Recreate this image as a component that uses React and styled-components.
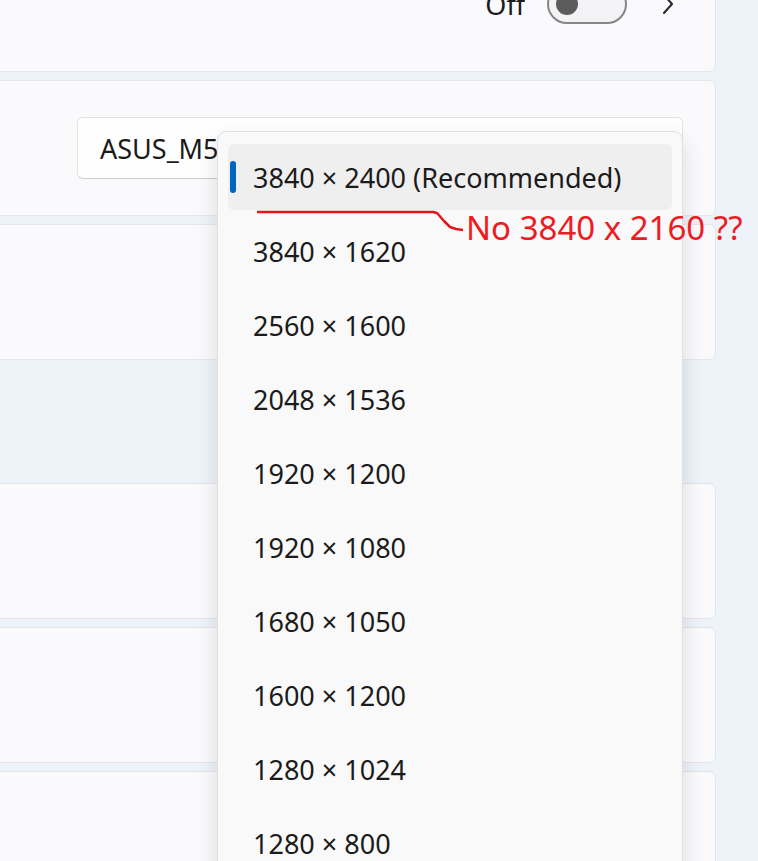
import React from "react";
import styled, { createGlobalStyle } from "styled-components";

const GlobalStyle = createGlobalStyle`
  html, body {
    margin: 0;
    padding: 0;
    background: #eef2f9;
  }
  body {
    font-family: "Noto Sans", "Open Sans", sans-serif;
    color: #1b1b1b;
  }
`;

const resolutions = [
  "3840 × 2400 (Recommended)",
  "3840 × 1620",
  "2560 × 1600",
  "2048 × 1536",
  "1920 × 1200",
  "1920 × 1080",
  "1680 × 1050",
  "1600 × 1200",
  "1280 × 1024",
  "1280 × 800",
];

const Page = styled.div`
  position: relative;
  width: 758px;
  height: 861px;
  overflow: hidden;
  background: #eef2f9;
`;

const Stack = styled.div`
  display: flex;
  flex-direction: column;
  gap: 8px;
  margin: -64px 42px 0 -10px;
`;

const Card = styled.div`
  height: 136px;
  box-sizing: border-box;
  background: #fafafc;
  border: 1px solid #e4e5ea;
  border-radius: 7px;
  display: flex;
  align-items: center;
  justify-content: flex-end;
  padding: 0 32px 0 0;
`;

const Spacer = styled.div`
  height: 107px;
`;

const StateLabel = styled.span`
  font-size: 27px;
  line-height: 36px;
  margin-right: 22px;
  margin-top: 2px;
`;

const Toggle = styled.div`
  width: 80px;
  height: 40px;
  box-sizing: border-box;
  border: 2px solid #858585;
  border-radius: 20px;
  background: #f3f3f5;
  display: flex;
  align-items: center;
  padding-left: 7px;
  margin-right: 34px;
`;

const Knob = styled.span`
  width: 22px;
  height: 22px;
  border-radius: 50%;
  background: #5c5c5c;
`;

const Chevron = styled.svg`
  margin-right: 8px;
`;

const Combo = styled.div`
  width: ${(p) => p.$w}px;
  height: 62px;
  box-sizing: border-box;
  background: #fefefe;
  border: 1px solid #e3e3e3;
  border-bottom-color: #cdcdcd;
  border-radius: 6px;
  display: flex;
  align-items: center;
  padding-left: 22px;
  font-size: 27px;
  white-space: nowrap;
  overflow: hidden;
`;

const Flyout = styled.div`
  position: absolute;
  left: 217px;
  top: 131px;
  width: 466px;
  height: 780px;
  box-sizing: border-box;
  background: #f9f9f9;
  border: 1px solid #e1e1e1;
  border-radius: 9px;
  box-shadow: 0 10px 22px rgba(0, 0, 0, 0.13);
  padding: 12px 10px;
  display: flex;
  flex-direction: column;
  gap: 8px;
`;

const Item = styled.div`
  position: relative;
  flex: none;
  height: 66px;
  border-radius: 6px;
  background: ${(p) => (p.$selected ? "#efefef" : "transparent")};
  display: flex;
  align-items: center;
  padding-left: 25px;
  font-size: 27px;
  white-space: nowrap;
`;

const Pill = styled.span`
  position: absolute;
  left: 2px;
  top: 17px;
  width: 6px;
  height: 32px;
  border-radius: 3px;
  background: #0067c0;
`;

const Scribble = styled.svg`
  position: absolute;
  left: 0;
  top: 0;
  pointer-events: none;
`;

const Note = styled.span`
  position: absolute;
  left: 466px;
  top: 208px;
  font-size: 33px;
  line-height: 40px;
  color: #ec1c24;
  white-space: nowrap;
`;

export default function App() {
  return (
    <Page>
      <GlobalStyle />
      <Stack>
        <Card>
          <StateLabel>Off</StateLabel>
          <Toggle>
            <Knob />
          </Toggle>
          <Chevron width="14" height="22" viewBox="0 0 14 22">
            <path d="M3 2 L11 11 L3 20" fill="none" stroke="#262626" strokeWidth="2" strokeLinecap="round" strokeLinejoin="round" />
          </Chevron>
        </Card>
        <Card>
          <Combo $w={606}>ASUS_M5</Combo>
        </Card>
        <Card />
        <Spacer />
        <Card />
        <Card>
          <Combo $w={466} />
        </Card>
        <Card>
          <Combo $w={466} />
        </Card>
      </Stack>

      <Flyout>
        {resolutions.map((r, i) => (
          <Item key={r} $selected={i === 0}>
            {i === 0 && <Pill />}
            {r}
          </Item>
        ))}
      </Flyout>

      <Scribble width="758" height="861">
        <path
          d="M257 212 L433 212 L437 213 L444 221 L450 227 L456 229 L463 230"
          fill="none"
          stroke="#e8141c"
          strokeWidth="2.5"
          strokeLinejoin="round"
        />
      </Scribble>
      <Note>No 3840 x 2160 ??</Note>
    </Page>
  );
}
